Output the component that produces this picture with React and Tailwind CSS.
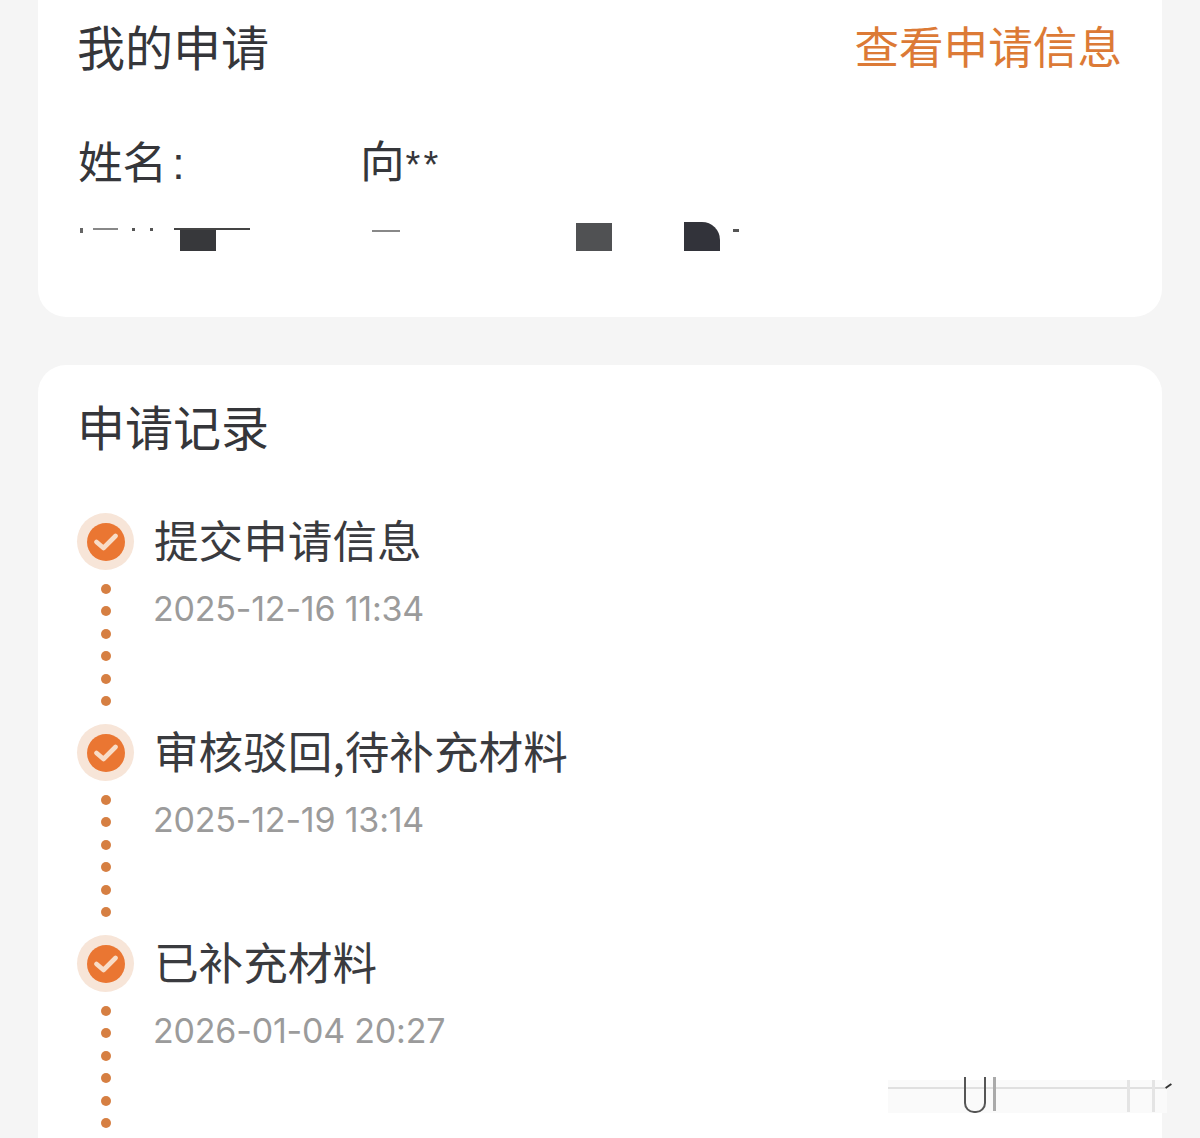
const FONT = "font-['Noto_Sans_CJK_SC','Noto_Sans',sans-serif]";

function Check() {
  return (
    <div className="flex h-[57px] w-[57px] shrink-0 items-center justify-center rounded-full bg-[#f7e5d8]">
      <div className="flex h-[38px] w-[38px] items-center justify-center rounded-full bg-[#ea7632]">
        <svg width="24" height="20" viewBox="0 0 24 20" fill="none">
          <path d="M2.5 10 L9.5 16 L21.5 4" stroke="#f8dcc7" strokeWidth="4.6" strokeLinecap="round" strokeLinejoin="round" />
        </svg>
      </div>
    </div>
  );
}

function Step({ title, time, titleClass }) {
  return (
    <div className="flex h-[211px] items-start">
      <div className="flex w-[57px] flex-col items-center">
        <Check />
        <div className="mt-[14px] flex flex-col gap-[12.4px]">
          {[0, 1, 2, 3, 4, 5].map((i) => (
            <div key={i} className="h-[10px] w-[10px] rounded-full bg-[#d67f42]" />
          ))}
        </div>
      </div>
      <div className="ml-[20px]">
        <div className={`-mt-[3px] h-[58px] text-[44.6px] leading-[58px] text-[#3a3b3f] ${titleClass}`}>{title}</div>
        <div className="-ml-[1px] mt-[16px] font-['Inter',sans-serif] text-[34px] leading-[50px] tracking-[-0.2px] text-[#9b9b9b]">{time}</div>
      </div>
    </div>
  );
}

function RedactedRow() {
  return (
    <div className="mt-[27px] flex h-[29px] items-start">
      <div className="mt-[6px] flex w-[96px] items-start">
        <div className="ml-[2px] h-[5px] w-[3px] bg-[#666666]" />
        <div className="ml-[10px] h-[2px] w-[25px] bg-[#888888]" />
        <div className="ml-[14px] h-[3px] w-[3px] bg-[#555555]" />
        <div className="ml-[15px] h-[3px] w-[3px] bg-[#555555]" />
      </div>
      <div className="mt-[6px] flex w-[76px] flex-col">
        <div className="h-[2px] w-full bg-[#444444]" />
        <div className="ml-[6px] h-[21px] w-[36px] bg-[#37383b]" />
      </div>
      <div className="ml-[122px] mt-[8px] h-[2px] w-[28px] bg-[#888888]" />
      <div className="ml-[176px] mt-[1px] h-[28px] w-[36px] bg-[#505153]" />
      <div className="ml-[72px] h-[29px] w-[36px] rounded-tr-[18px] bg-[#32333a]" />
      <div className="ml-[13px] mt-[7px] h-[3px] w-[6px] bg-[#555555]" />
    </div>
  );
}

export default function App() {
  return (
    <div className={`relative h-[1138px] w-[1200px] overflow-hidden bg-[#f5f5f5] ${FONT}`}>
      <div className="mx-[38px] -mt-[30px] h-[347px] rounded-[28px] bg-white px-[40px] pt-[45px]">
        <div className="flex items-center justify-between">
          <div className="-ml-[1px] text-[48px] leading-[60px] text-[#35363a]">我的申请</div>
          <div className="text-[44.6px] leading-[60px] text-[#dc7a36]">查看申请信息</div>
        </div>
        <div className="mt-[54px] flex items-center text-[#35363a]">
          <div className="w-[282px] text-[44.6px] leading-[60px]">
            姓名<span className="ml-[5px] font-['Liberation_Sans',sans-serif]">:</span>
          </div>
          <div className="text-[44.6px] leading-[60px]">
            向<span className="ml-[1px] font-['Liberation_Sans',sans-serif] text-[38px] tracking-[3px]">**</span>
          </div>
        </div>
        <RedactedRow />
      </div>

      <div className="relative mx-[38px] mt-[48px] h-[800px] rounded-t-[28px] bg-white pl-[39px] pt-[30px]">
        <div className="h-[60px] text-[48px] leading-[60px] text-[#35363a]">申请记录</div>
        <div className="mt-[58px]">
          <Step title="提交申请信息" time="2025-12-16 11:34" titleClass="" />
          <Step title="审核驳回,待补充材料" time="2025-12-19 13:14" titleClass="" />
          <Step title="已补充材料" time="2026-01-04 20:27" titleClass="" />
        </div>

        <div className="absolute left-[850px] top-[712px] flex h-[36px] w-[279px] items-start bg-[linear-gradient(to_bottom,transparent_3px,#fafafa_3px,#fafafa_10px,#e0e0e0_10px,#e0e0e0_12px,#fafafa_12px)]">
          <div className="ml-[76px] h-[36px] w-[22px] shrink-0 rounded-b-[10px] border-x-2 border-b-2 border-[#555555]" />
          <div className="ml-[7px] h-[34px] w-[3px] shrink-0 bg-[#aaaaaa]" />
          <div className="ml-[131px] mt-[3px] h-[32px] w-[3px] shrink-0 bg-[#e4e4e4]" />
          <div className="ml-[22px] mt-[3px] h-[32px] w-[3px] shrink-0 bg-[#e4e4e4]" />
          <div className="ml-[10px] mt-[8px] h-[2px] w-[7px] shrink-0 -rotate-[35deg] bg-[#333333]" />
        </div>
      </div>
    </div>
  );
}
